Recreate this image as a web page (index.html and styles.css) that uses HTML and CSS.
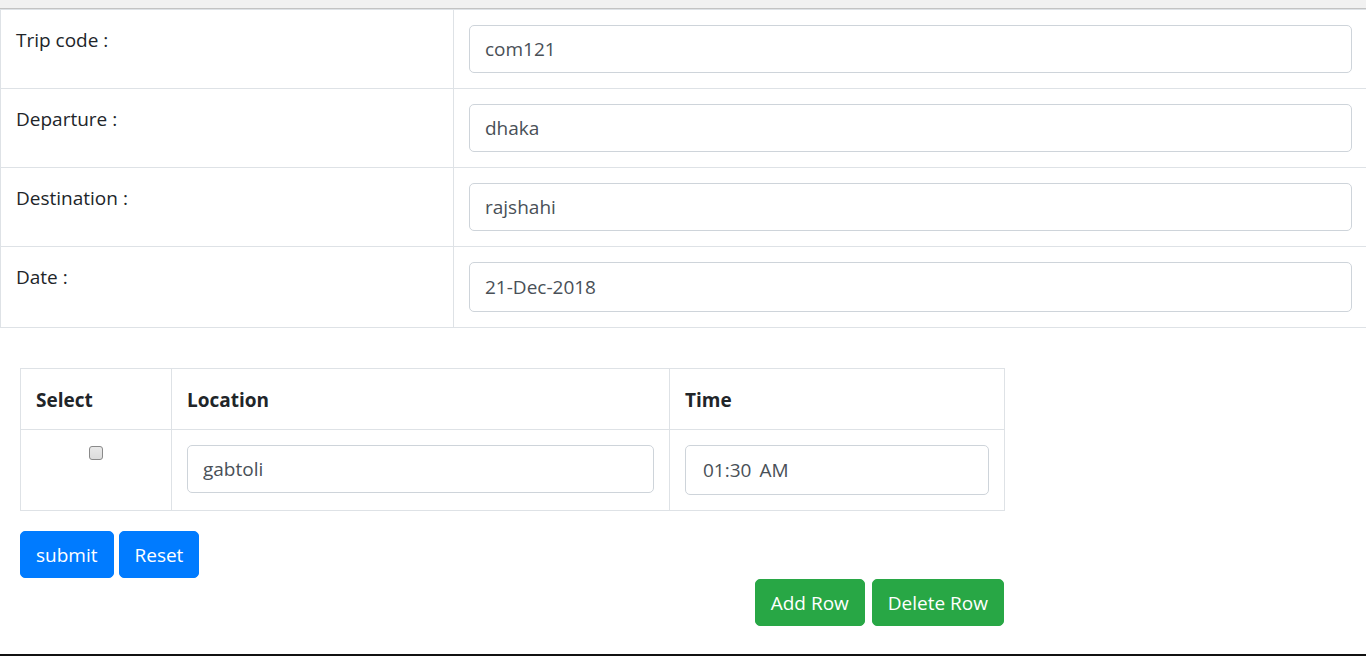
FILE: index.html
```html
<!DOCTYPE html>
<html lang="en">
<head>
<meta charset="utf-8">
<title>Trip</title>
<link rel="stylesheet" href="styles.css">
</head>
<body>
<div class="topbar"></div>
<table class="info">
  <colgroup><col class="info-lblcol"><col></colgroup>
  <tr><td>Trip code :</td><td><input class="fc" type="text" value="com121"></td></tr>
  <tr><td>Departure :</td><td><input class="fc" type="text" value="dhaka"></td></tr>
  <tr><td>Destination :</td><td><input class="fc" type="text" value="rajshahi"></td></tr>
  <tr><td>Date :</td><td><input class="fc fc-date" type="text" value="21-Dec-2018"></td></tr>
</table>
<div class="section">
  <table class="stops">
    <colgroup><col class="c-sel"><col class="c-loc"><col class="c-time"></colgroup>
    <thead>
      <tr><th>Select</th><th>Location</th><th>Time</th></tr>
    </thead>
    <tbody>
      <tr>
        <td class="center"><span class="chk"></span></td>
        <td><input class="fc" type="text" value="gabtoli"></td>
        <td><input class="fc fc-time" type="text" value="01:30 AM"></td>
      </tr>
    </tbody>
  </table>
  <div class="actions">
    <button class="btn btn-blue" type="button">submit</button>
    <button class="btn btn-blue" type="button">Reset</button>
  </div>
  <div class="row-actions">
    <button class="btn btn-green" type="button">Add Row</button>
    <button class="btn btn-green" type="button">Delete Row</button>
  </div>
</div>
<div class="taskbar"></div>
</body>
</html>
```
FILE: styles.css
```css
html, body {
  margin: 0;
  padding: 0;
  background: #fff;
  overflow: hidden;
}
body {
  font-family: "Open Sans", "Noto Sans", sans-serif;
  font-size: 19px;
  line-height: 30px;
  color: #212529;
}
.topbar {
  height: 8px;
  background: #f1f1f1;
  border-bottom: 1px solid #c3c3c3;
}
table {
  border-collapse: collapse;
  table-layout: fixed;
}
td, th {
  border: 1px solid #dee2e6;
  padding: 15px;
  vertical-align: top;
  text-align: left;
}
.info {
  width: 1368px;
}
.info-lblcol { width: 453px; }
.fc {
  display: block;
  box-sizing: border-box;
  width: 100%;
  height: 48px;
  margin: 0;
  padding: 7px 15px;
  font-family: inherit;
  font-size: 19px;
  line-height: 30px;
  color: #495057;
  background: #fff;
  border: 1px solid #ced4da;
  border-radius: 5px;
  outline: none;
}
.fc-date { height: 50px; }
.fc-time { height: 50px; padding-left: 17px; word-spacing: 3px; }
.section {
  width: 984px;
  margin: 40px 0 0 20px;
}
.stops { width: 984px; }
.c-sel { width: 151px; }
.c-loc { width: 498px; }
.c-time { width: 335px; }
.stops th {
  font-weight: 700;
  padding-top: 16px;
  padding-bottom: 14px;
}
.center { text-align: center; }
.chk {
  display: inline-block;
  box-sizing: border-box;
  width: 14px;
  height: 14px;
  margin-top: 1px;
  vertical-align: top;
  border: 1px solid #8a8a8a;
  border-radius: 3px;
  background: linear-gradient(#e9e9e9, #dcdcdc);
}
.actions {
  display: flex;
  gap: 5px;
  margin-top: 20px;
}
.row-actions {
  display: flex;
  justify-content: flex-end;
  gap: 7px;
  margin-top: 1px;
}
.btn {
  box-sizing: border-box;
  height: 47px;
  padding: 7px 15px;
  font-family: inherit;
  font-size: 19px;
  line-height: 30px;
  color: #fff;
  border: 1px solid transparent;
  border-radius: 5px;
  cursor: pointer;
}
.btn-blue { background: #007bff; border-color: #007bff; }
.btn-green { background: #28a745; border-color: #28a745; }
.taskbar {
  height: 2px;
  margin-top: 28px;
  background: #111;
}
```
